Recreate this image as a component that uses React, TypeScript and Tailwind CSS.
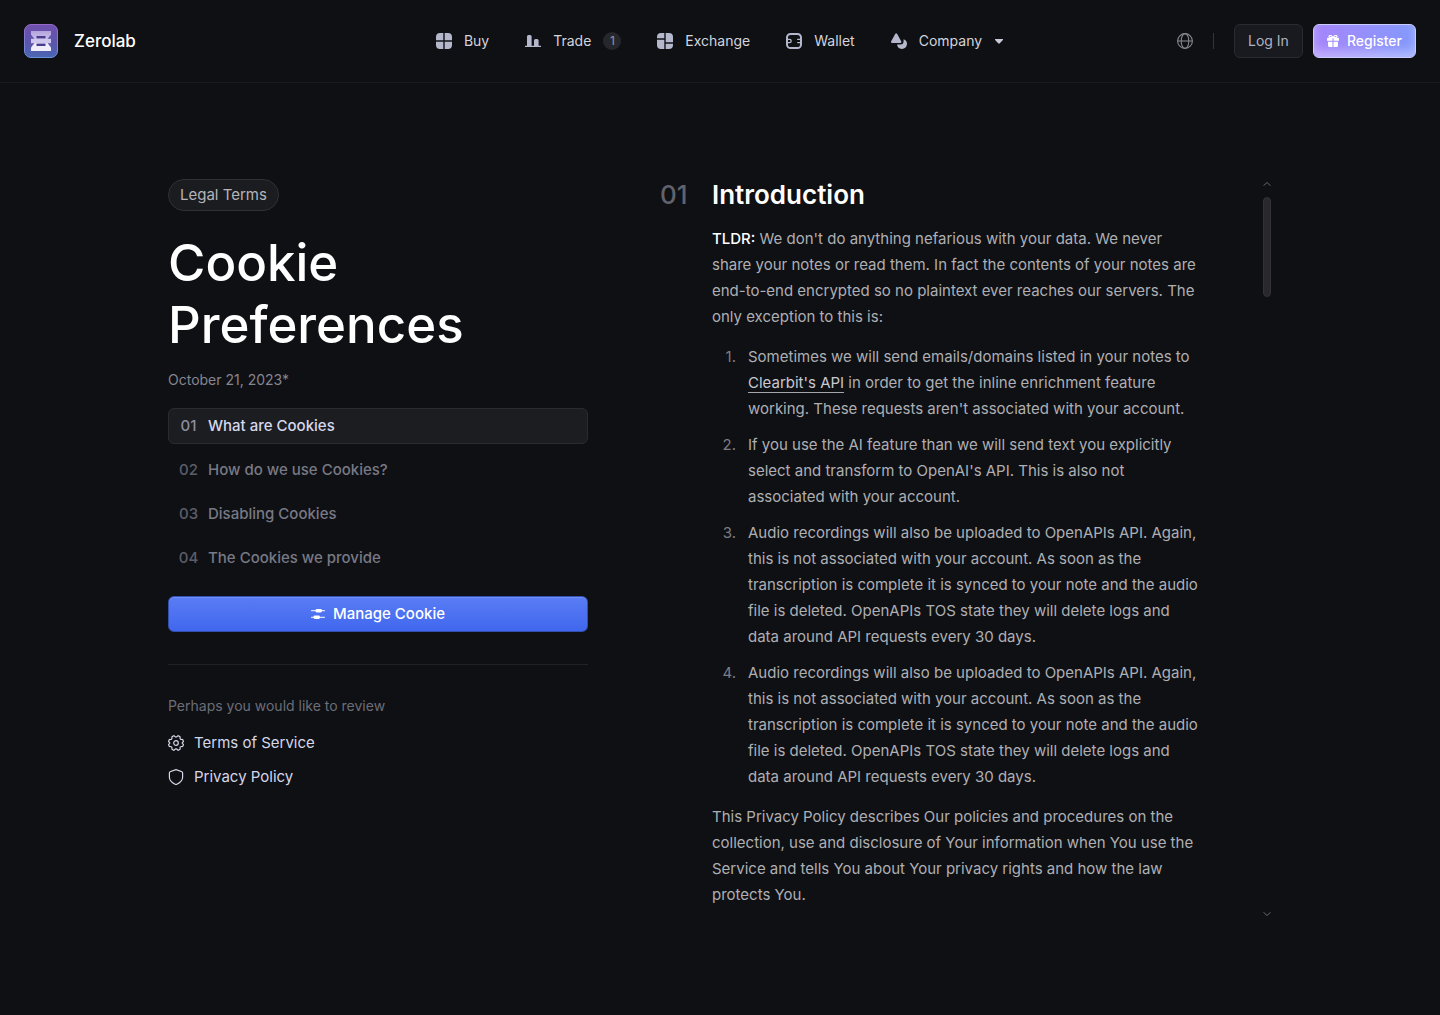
import type { ReactNode } from 'react';
import clsx from 'clsx';

function LogoMark() {
  return (
    <svg width="34" height="34" viewBox="0 0 34 34" aria-hidden="true">
      <defs>
        <linearGradient id="logo-bg" x1="0" y1="0" x2="0" y2="1">
          <stop offset="0" stopColor="#7150ae" />
          <stop offset="0.6" stopColor="#5a57ab" />
          <stop offset="1" stopColor="#4a66b4" />
        </linearGradient>
        <linearGradient id="logo-edge" x1="0" y1="0" x2="0" y2="1">
          <stop offset="0" stopColor="#9469c8" />
          <stop offset="1" stopColor="#6d92dc" />
        </linearGradient>
        <linearGradient id="logo-top" x1="0" y1="0" x2="0" y2="1">
          <stop offset="0" stopColor="#b3a4dc" />
          <stop offset="1" stopColor="#c9bfea" />
        </linearGradient>
      </defs>
      <rect x="0.5" y="0.5" width="33" height="33" rx="6.5" fill="url(#logo-bg)" stroke="url(#logo-edge)" />
      {/* top plate, middle bar, bottom plate */}
      <path d="M7 7h20v3.500L23.500 15h-13L7 10.500z" fill="url(#logo-top)" />
      <path d="M10.500 19h13l3.500 4.500V27H7v-3.500z" fill="#efecfb" />
      <path d="M12.500 12h9v2.500h-9zM12.500 19.500h9V22h-9z" fill="#4a3d90" />
      <path d="M7 14.800h20v4.400H7z" fill="#d0c7ee" />
    </svg>
  );
}

function NavIcon({ children }: { children: ReactNode }) {
  return (
    <svg width="16" height="16" viewBox="0 0 16 16" fill="#b5b8cd" aria-hidden="true">
      {children}
    </svg>
  );
}

const BuyIcon = () => (
  <NavIcon>
    <path d="M4 0h3.300v7.300H0V4a4 4 0 0 1 4-4zM8.700 0H12a4 4 0 0 1 4 4v3.300H8.700zM0 8.700h7.300V16H4a4 4 0 0 1-4-4zM8.700 8.700H16V12a4 4 0 0 1-4 4H8.700z" />
  </NavIcon>
);

const TradeIcon = () => (
  <NavIcon>
    <path d="M0 12.700h2V3.500A1.500 1.500 0 0 1 3.500 2h1.600a1.500 1.500 0 0 1 1.500 1.500v9.200H9V7.500A1.500 1.500 0 0 1 10.500 6h1.600a1.500 1.500 0 0 1 1.500 1.500v5.200H16V14H0z" />
  </NavIcon>
);

const ExchangeIcon = () => (
  <NavIcon>
    <path d="M4 0h3.300v5.300H0V4a4 4 0 0 1 4-4zM0 6.700h7.300V16H4a4 4 0 0 1-4-4zM8.700 0H12a4 4 0 0 1 4 4v5.300H8.700zM8.700 10.700H16V12a4 4 0 0 1-4 4H8.700z" />
  </NavIcon>
);

const WalletIcon = () => (
  <NavIcon>
    <rect x="1" y="1" width="14" height="14" rx="3.600" fill="none" stroke="#b5b8cd" strokeWidth="2" />
    <path d="M1 6.400h2.600a1.600 1.600 0 0 1 0 3.200H1M15 6.400h-3.300M15 9.600h-3.300" fill="none" stroke="#b5b8cd" strokeWidth="1.300" strokeLinecap="round" />
  </NavIcon>
);

const CompanyIcon = () => (
  <NavIcon>
    <path d="M4.200 1q1-1.600 2 0l4 7.200q.8 1.600-.8 1.800H1.100Q-.5 9.800.2 8.200z" />
    <path d="M12.600 6.200A5 5 0 1 1 6 11.600h3.600q2.600-.2 2.900-2.400.1-1.400.1-3z" />
  </NavIcon>
);

function GiftIcon() {
  return (
    <svg width="12" height="12" viewBox="0 0 12 12" fill="#fff" aria-hidden="true">
      <path d="M6 2.800C5 0 1.800-.3 2 1.600c.1 1 1.800 1.200 4 1.200zm0 0C7 0 10.200-.3 10 1.600c-.1 1-1.800 1.200-4 1.200z" fill="none" stroke="#fff" strokeWidth="1.100" />
      <path d="M1 2.800h4.500v3H0v-2a1 1 0 0 1 1-1zM6.500 2.800H11a1 1 0 0 1 1 1v2H6.500zM1 6.800h4.500V12h-3A1.500 1.500 0 0 1 1 10.500zM6.500 6.800H11v3.700A1.500 1.500 0 0 1 9.500 12h-3z" />
    </svg>
  );
}

function GlobeIcon() {
  return (
    <svg width="16" height="16" viewBox="0 0 16 16" fill="none" stroke="#85868f" strokeWidth="1.100" aria-hidden="true">
      <circle cx="8" cy="8" r="7.400" />
      <ellipse cx="8" cy="8" rx="3.800" ry="7.400" />
      <path d="M.5 8h15" />
    </svg>
  );
}

function SlidersIcon() {
  return (
    <svg width="14" height="12" viewBox="0 0 14 12" fill="#fff" aria-hidden="true">
      <rect x="4.500" y="1" width="6.500" height="3.400" rx="1.400" />
      <rect x="2.500" y="7.600" width="6.500" height="3.400" rx="1.400" />
      <path d="M.5 2.700h13M.5 9.300h13" stroke="#fff" strokeLinecap="round" />
    </svg>
  );
}

function GearIcon() {
  return (
    <svg width="16" height="16" viewBox="0 0 16 16" fill="none" stroke="#d5d7e8" strokeWidth="1.200" strokeLinejoin="round" aria-hidden="true">
      <path d="M5.700.7 4 1.700c-.5.4.4 1.700-.4 2.400-.7.800-2.100 0-2.400.6L.6 6.400c-.2.600 1.200.7 1.200 1.600S.4 9 .6 9.600l.6 1.700c.3.600 1.700-.2 2.400.6.8.7-.1 2 .4 2.400l1.700 1c.6.200.9-1.400 2.300-1.400s1.700 1.600 2.300 1.400l1.700-1c.5-.4-.4-1.700.4-2.400.7-.8 2.100 0 2.400-.6l.6-1.700c.2-.6-1.200-.7-1.200-1.600s1.400-1 1.200-1.600l-.6-1.700c-.3-.6-1.700.2-2.400-.6-.8-.7.1-2-.4-2.400l-1.700-1C9.700.5 9.400 2.100 8 2.100S6.300.5 5.700.7z" />
      <circle cx="8" cy="8" r="2.300" />
    </svg>
  );
}

function ShieldIcon() {
  return (
    <svg width="16" height="16" viewBox="0 0 16 16" fill="none" stroke="#d5d7e8" strokeWidth="1.200" strokeLinejoin="round" aria-hidden="true">
      <path d="M7.200.9q.8-.4 1.600 0l5.100 1.900q.7.300.7 1.100v4.300c0 3.300-2.300 5.400-5.700 7q-.9.400-1.800 0c-3.400-1.600-5.700-3.700-5.700-7V3.900q0-.8.7-1.100z" />
    </svg>
  );
}

interface NavItem {
  label: string;
  icon: ReactNode;
  badge?: number;
  menu?: boolean;
}

const NAV: NavItem[] = [
  { label: 'Buy', icon: <BuyIcon /> },
  { label: 'Trade', icon: <TradeIcon />, badge: 1 },
  { label: 'Exchange', icon: <ExchangeIcon /> },
  { label: 'Wallet', icon: <WalletIcon /> },
  { label: 'Company', icon: <CompanyIcon />, menu: true },
];

const SECTIONS = ['What are Cookies', 'How do we use Cookies?', 'Disabling Cookies', 'The Cookies we provide'];

const AUDIO =
  'Audio recordings will also be uploaded to OpenAPIs API. Again, this is not associated with your account. As soon as the transcription is complete it is synced to your note and the audio file is deleted. OpenAPIs TOS state they will delete logs and data around API requests every 30 days.';

const CLAUSES: ReactNode[] = [
  <>
    Sometimes we will send emails/domains listed in your notes to{' '}
    <a href="#clearbit" className="border-b border-[#a3a4ac] text-[#c8c9d2]">Clearbit's API</a> in order to get the inline
    enrichment feature working. These requests aren't associated with your account.
  </>,
  "If you use the AI feature than we will send text you explicitly select and transform to OpenAI's API. This is also not associated with your account.",
  AUDIO,
  AUDIO,
];

function Header() {
  return (
    <header className="grid grid-cols-[1fr_auto_1fr] items-center border-b border-[#1b1c21] px-6 py-6">
      <a href="#home" className="flex items-center gap-4 text-[17px] leading-6 font-medium text-white">
        <LogoMark />
        Zerolab
      </a>
      <nav className="flex items-center gap-9 text-sm text-[#d3d4dc]">
        {NAV.map(({ label, icon, badge, menu }) => (
          <a key={label} href={`#${label.toLowerCase()}`} className="flex items-center gap-3">
            {icon}
            {label}
            {badge != null && (
              <span className="flex size-[18px] items-center justify-center rounded-full bg-[#26272d] text-xs text-[#9496a3]">
                {badge}
              </span>
            )}
            {menu && (
              <svg width="10" height="5" viewBox="0 0 10 5" fill="#c9cbdb" aria-hidden="true">
                <path d="M1.500 0h7q1.100.1.400 1L5.800 4.300q-.8.700-1.600 0L1.100 1Q.4.100 1.500 0z" />
              </svg>
            )}
          </a>
        ))}
      </nav>
      <div className="flex items-center justify-end">
        <button type="button" aria-label="Language">
          <GlobeIcon />
        </button>
        <span className="mx-5 h-4 w-px bg-[#34353b]" />
        <button
          type="button"
          className="h-[34px] rounded-md border border-[#2a2b31] bg-[#191a1f] px-[13px] text-sm text-[#b0b2c0]"
        >
          Log In
        </button>
        <button
          type="button"
          className="ml-2.5 flex h-[34px] items-center gap-2 rounded-md border border-[#c9ccfa] bg-linear-to-r from-[#a585fb] to-[#8399fc] px-[13px] text-sm font-medium text-white shadow-[inset_0_-6px_10px_rgba(255,255,255,0.35)]"
        >
          <GiftIcon />
          Register
        </button>
      </div>
    </header>
  );
}

function Sidebar() {
  return (
    <aside>
      <span className="inline-flex h-8 items-center rounded-full border border-[#303137] bg-[#1b1c20] px-[11px] align-top text-[15px] text-[#b5b5b9]">
        Legal Terms
      </span>
      <h1 className="mt-[21px] text-[51px] leading-[62px] font-medium text-white">
        Cookie
        <br />
        Preferences
      </h1>
      <p className="mt-3.5 text-sm text-[#85868f]">October 21, 2023*</p>
      <ul className="mt-[18px] space-y-2 text-[15px] font-medium">
        {SECTIONS.map((title, i) => (
          <li key={title}>
            <a
              href={`#section-${i + 1}`}
              className={clsx(
                'flex h-9 items-center rounded-md border',
                i === 0 ? 'border-[#2a2b30] bg-[#1c1d21] text-[#d5d8ec]' : 'border-transparent text-[#787985]'
              )}
            >
              <span className={clsx('w-[39px] text-center', i === 0 ? 'text-[#8d8e9b]' : 'text-[#5c5d68]')}>
                0{i + 1}
              </span>
              {title}
            </a>
          </li>
        ))}
      </ul>
      <button
        type="button"
        className="mt-5 flex h-9 w-full items-center justify-center gap-2 rounded-md border border-[#3450ae] bg-linear-to-b from-[#5a7cf4] to-[#4067ee] text-[15px] font-medium text-white shadow-[inset_0_1px_0_rgba(255,255,255,0.15)]"
      >
        <SlidersIcon />
        Manage Cookie
      </button>
      <hr className="mt-8 border-[#202126]" />
      <p className="mt-[31px] text-sm text-[#6c6d77]">Perhaps you would like to review</p>
      <ul className="mt-[15px] space-y-2.5 text-[15px] leading-6 text-[#d5d7e8]">
        <li>
          <a href="#terms" className="flex items-center gap-2.5">
            <GearIcon />
            Terms of Service
          </a>
        </li>
        <li>
          <a href="#privacy" className="flex items-center gap-2.5">
            <ShieldIcon />
            Privacy Policy
          </a>
        </li>
      </ul>
    </aside>
  );
}

function ScrollRail() {
  return (
    <div className="flex w-2.5 flex-col items-center pt-[3px]" aria-hidden="true">
      <svg width="8" height="4" viewBox="0 0 8 4" fill="none" stroke="#65666b">
        <path d="M.4 3.800 4 .5l3.600 3.300" />
      </svg>
      <div className="mt-[11px] h-[100px] w-2 rounded-full border border-[#323338] bg-[#29292d]" />
      <svg className="mt-auto" width="8" height="4" viewBox="0 0 8 4" fill="none" stroke="#65666b">
        <path d="M.4.2 4 3.500 7.600.2" />
      </svg>
    </div>
  );
}

function Article() {
  return (
    <div className="flex justify-between">
      <article className="grid max-w-[544px] grid-cols-[52px_minmax(0,1fr)] text-[15px] leading-[26px] text-[#aeafb3]">
        <span className="text-[26px] leading-8 font-medium text-[#62626d]">01</span>
        <h2 className="text-[26px] leading-8 font-semibold text-white">Introduction</h2>
        <div className="col-start-2 mt-[15px] pb-2">
          <p>
            <strong className="font-medium text-white">TLDR:</strong> We don't do anything nefarious with your data. We
            never share your notes or read them. In fact the contents of your notes are end-to-end encrypted so no
            plaintext ever reaches our servers. The only exception to this is:
          </p>
          <ol className="my-3.5 space-y-2.5">
            {CLAUSES.map((clause, i) => (
              <li key={i} className="flex">
                <span className="w-6 shrink-0 text-right text-[#7c7d85]">{i + 1}.</span>
                <p className="ml-3">{clause}</p>
              </li>
            ))}
          </ol>
          <p>
            This Privacy Policy describes Our policies and procedures on the collection, use and disclosure of Your
            information when You use the Service and tells You about Your privacy rights and how the law protects You.
          </p>
        </div>
      </article>
      <ScrollRail />
    </div>
  );
}

export default function App() {
  return (
    <div className="min-h-screen bg-[#0f1014] font-['Inter',sans-serif] antialiased">
      <Header />
      <main className="mx-auto grid max-w-[1104px] grid-cols-[420px_minmax(0,1fr)] gap-[72px] pt-24 pb-24">
        <Sidebar />
        <Article />
      </main>
    </div>
  );
}
